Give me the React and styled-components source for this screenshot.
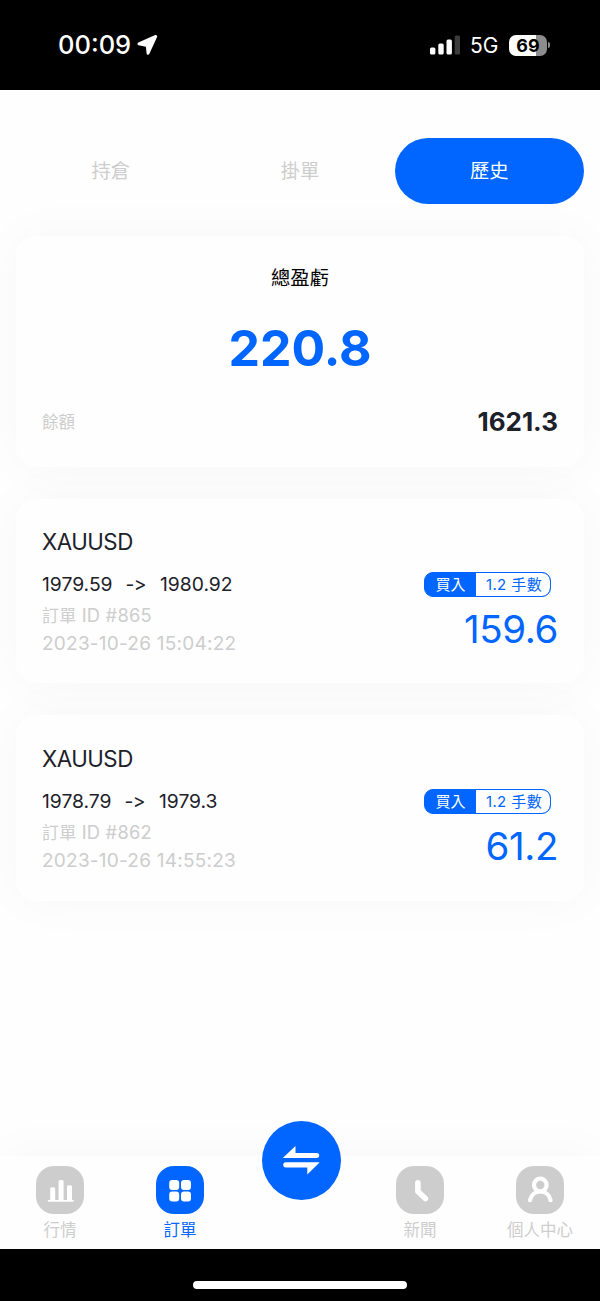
import React from "react";
import styled, { createGlobalStyle } from "styled-components";

const BLUE = "#0066ff";
const GREY = "#cdcdcd";
const INK = "#1d2129";

const GlobalStyle = createGlobalStyle`
  * { box-sizing: border-box; }
  body {
    margin: 0;
    background: #fff;
    font-family: Inter, "Noto Sans CJK TC", sans-serif;
    color: ${INK};
  }
`;

const Screen = styled.div`
  display: flex;
  flex-direction: column;
  width: 600px;
  height: 1301px;
  overflow: hidden;
  background: #fefefe;
`;

const StatusBar = styled.header`
  display: flex;
  justify-content: space-between;
  align-items: center;
  height: 90px;
  flex: none;
  padding: 0 50px 0 58px;
  background: #000;
  color: #fff;
`;

const StatusGroup = styled.div`
  display: flex;
  align-items: center;
  height: 26px;
`;

const Clock = styled.span`
  width: 73px;
  margin: -1px 6px 0 0;
  font-size: 25.5px;
  font-weight: 500;
  white-space: nowrap;
`;

const Network = styled.span`
  width: 29px;
  margin: 1px 10px 0 9px;
  font-size: 21px;
`;

const Battery = styled.div`
  display: flex;
  align-items: center;
  justify-content: center;
  width: 38px;
  height: 21px;
  border-radius: 7px;
  background: linear-gradient(to right, #fff 70%, #8c8c8c 70%);
  color: #000;
  font-size: 18px;
  font-weight: 700;
`;

const BatteryCap = styled.span`
  width: 2px;
  height: 6px;
  margin-left: 1px;
  border-radius: 0 2px 2px 0;
  background: #8c8c8c;
`;

const Content = styled.main`
  display: flex;
  flex-direction: column;
  gap: 32px;
  flex: 1;
  padding: 48px 16px 0;
`;

const Tabs = styled.nav`
  display: flex;
  height: 66px;
`;

const Tab = styled.button`
  flex: 1;
  height: 65.5px;
  padding: 0;
  border: 0;
  border-radius: 33px;
  background: ${(p) => (p.$active ? BLUE : "transparent")};
  color: ${(p) => (p.$active ? "#fff" : GREY)};
  font: 400 19.3px/66px Inter, "Noto Sans CJK TC", sans-serif;
`;

const Card = styled.section`
  border-radius: 20px;
  background: #fefefe;
  box-shadow: 0 0 54px rgba(0, 0, 0, 0.03);
`;

const SummaryCard = styled(Card)`
  display: flex;
  flex-direction: column;
  align-items: center;
  height: 231px;
  padding: 27px 26px 0;
`;

const SummaryTitle = styled.h1`
  margin: 0;
  font-size: 19.3px;
  line-height: 30px;
  font-weight: 400;
  color: #000;
`;

const SummaryTotal = styled.div`
  margin-top: 23px;
  font-size: 50px;
  line-height: 64px;
  font-weight: 700;
  color: ${BLUE};
`;

const BalanceRow = styled.div`
  display: flex;
  justify-content: space-between;
  align-items: center;
  align-self: stretch;
  height: 32px;
  margin-top: 25px;
`;

const Muted = styled.div`
  font-size: 16.5px;
  color: ${GREY};
`;

const Balance = styled.strong`
  font-size: 26px;
  font-weight: 700;
`;

const OrderCard = styled(Card)`
  display: flex;
  justify-content: space-between;
  height: ${(p) => p.$height}px;
  padding: ${(p) => p.$top}px 26px 0;
`;

const OrderInfo = styled.div`
  padding-top: 0.5px;
  white-space: nowrap;
`;

const Symbol = styled.h2`
  margin: 0;
  font-size: 22.3px;
  line-height: 32px;
  font-weight: 400;
  letter-spacing: -0.5px;
`;

const Prices = styled.div`
  display: flex;
  margin-top: 11.5px;
  font-size: 19.3px;
  line-height: 30px;
`;

const Arrow = styled.span`
  margin: 0 14px 0 13px;
  font-feature-settings: "calt" 0;
  letter-spacing: -0.6px;
`;

const Detail = styled.div`
  font-size: ${(p) => p.$size}px;
  line-height: ${(p) => p.$line}px;
  letter-spacing: ${(p) => p.$spacing}px;
  color: ${GREY};
`;

const Cjk = styled.span`
  font-size: 17px;
`;

const OrderResult = styled.div`
  display: flex;
  flex-direction: column;
  align-items: flex-end;
  padding-top: 47px;
`;

const Badge = styled.div`
  display: flex;
  width: 127px;
  height: 25px;
  margin-right: 7px;
  border: 1.5px solid ${BLUE};
  border-radius: 9px;
  overflow: hidden;
  background: ${BLUE};
  font-size: 15px;
  line-height: 23px;
  white-space: nowrap;
`;

const Side = styled.span`
  width: 51px;
  text-align: center;
  color: #fff;
`;

const Lots = styled.span`
  flex: 1;
  border-radius: 0 8px 8px 0;
  text-align: center;
  background: #fefefe;
  color: ${BLUE};
  letter-spacing: 0.4px;
  text-indent: 2px;
`;

const Profit = styled.div`
  margin-top: 8px;
  font-size: 38.5px;
  line-height: 48px;
  letter-spacing: -0.4px;
  color: ${BLUE};
`;

const TabBar = styled.nav`
  position: relative;
  display: grid;
  grid-template-columns: repeat(5, 1fr);
  height: 93px;
  flex: none;
  padding-top: 10px;
  background: #fefefe;
  box-shadow: 0 0 54px rgba(0, 0, 0, 0.03);
`;

const NavItem = styled.div`
  display: flex;
  flex-direction: column;
  align-items: center;
  color: ${(p) => (p.$active ? BLUE : GREY)};
  font-size: 16.5px;
  line-height: 32px;
  white-space: nowrap;
`;

const NavIcon = styled.div`
  width: 48px;
  height: 47.6px;
  margin-top: 0.4px;
  border-radius: 18px;
  background: currentColor;
  svg { display: block; }
`;

const TradeButton = styled.button`
  justify-self: center;
  width: 79px;
  height: 79px;
  margin: -45px 0 0 2px;
  padding: 0;
  border: 0;
  border-radius: 50%;
  background: ${BLUE};
  svg { display: block; }
`;

const HomeArea = styled.footer`
  display: flex;
  justify-content: center;
  align-items: center;
  height: 52px;
  flex: none;
  padding-top: 20px;
  background: #000;
`;

const HomeIndicator = styled.div`
  width: 214px;
  height: 8px;
  border-radius: 4px;
  background: #fff;
`;

const LocationIcon = () => (
  <svg width="22" height="22" viewBox="0 0 22 22">
    <path d="M18.8 2.4L1.9 9.9L10.2 11.6L11 19.3Z" fill="#fff" stroke="#fff" strokeWidth="2.8" strokeLinejoin="round" />
  </svg>
);

const SignalIcon = () => (
  <svg width="31" height="20" viewBox="0 0 31 20">
    <rect x="0" y="12.5" width="5.4" height="7" rx="1.5" fill="#fff" />
    <rect x="8.3" y="8.5" width="5.4" height="11" rx="1.5" fill="#fff" />
    <rect x="16.5" y="4.5" width="5.4" height="15" rx="1.5" fill="#fff" />
    <rect x="24.7" y=".5" width="5.3" height="19" rx="1.5" fill="#3c3c3c" />
  </svg>
);

const NavDrawing = ({ children }) => (
  <svg width="48" height="48" viewBox="0 0 48 48" fill="#fff">{children}</svg>
);

const ChartIcon = () => (
  <NavDrawing>
    <path d="M14.2 34V22.8q0-1.5 1.5-1.5h2q1.5 0 1.5 1.5v11.2zM22.6 34V15.4q0-1.5 1.5-1.5h2q1.5 0 1.5 1.5v18.6zM31 34V20.8q0-1.5 1.5-1.5h2q1.5 0 1.5 1.5v13.2z" />
    <rect x="11.8" y="34" width="26" height="1.8" rx=".8" />
  </NavDrawing>
);

const GridIcon = () => (
  <NavDrawing>
    <rect x="13.2" y="13.9" width="10" height="10.2" rx="3" />
    <rect x="25" y="13.9" width="10" height="10.2" rx="3" />
    <rect x="13.2" y="25.4" width="10" height="10.2" rx="3" />
    <rect x="25" y="25.4" width="10" height="10.2" rx="3" />
  </NavDrawing>
);

const ClockIcon = () => (
  <NavDrawing>
    <path d="M21.9 16.9V25.4L29.4 32.6" fill="none" stroke="#fff" strokeWidth="5.6" strokeLinecap="round" strokeLinejoin="round" />
  </NavDrawing>
);

const UserIcon = () => (
  <NavDrawing>
    <g fill="none" stroke="#fff" strokeWidth="4.2" strokeLinecap="round">
      <circle cx="24.3" cy="19" r="6.3" />
      <path d="M14 34.2C16.6 22.4 32 22.4 34.6 34.2" />
    </g>
  </NavDrawing>
);

const SwapIcon = () => (
  <svg width="79" height="79" viewBox="0 0 79 79" fill="#fff">
    <path d="M21 36.8L33.5 25V32H55Q57.3 32.2 57.3 34.5T55 37H21.4Z" />
    <path d="M57.5 41.4L45.3 53.5V46.5H23.8Q21.2 46.3 21.2 43.8T23.8 41.2H57Z" />
  </svg>
);

const orders = [
  { id: 865, height: 184, top: 26, open: "1979.59", close: "1980.92", time: "2023-10-26 15:04:22", profit: "159.6" },
  { id: 862, height: 186, top: 27, open: "1978.79", close: "1979.3", time: "2023-10-26 14:55:23", profit: "61.2" },
];

function Order({ order }) {
  return (
    <OrderCard $height={order.height} $top={order.top}>
      <OrderInfo>
        <Symbol>XAUUSD</Symbol>
        <Prices>
          <span>{order.open}</span>
          <Arrow>-&gt;</Arrow>
          <span>{order.close}</span>
        </Prices>
        <Detail $size={18.3} $line={32} $spacing={0.2}><Cjk>訂單</Cjk> ID #{order.id}</Detail>
        <Detail $size={19} $line={23} $spacing={0.24}>{order.time}</Detail>
      </OrderInfo>
      <OrderResult>
        <Badge>
          <Side>買入</Side>
          <Lots>1.2 手數</Lots>
        </Badge>
        <Profit>{order.profit}</Profit>
      </OrderResult>
    </OrderCard>
  );
}

export default function App() {
  return (
    <>
      <GlobalStyle />
      <Screen>
        <StatusBar>
          <StatusGroup>
            <Clock>00:09</Clock>
            <LocationIcon />
          </StatusGroup>
          <StatusGroup>
            <SignalIcon />
            <Network>5G</Network>
            <Battery>69</Battery>
            <BatteryCap />
          </StatusGroup>
        </StatusBar>
        <Content>
          <Tabs>
            <Tab>持倉</Tab>
            <Tab>掛單</Tab>
            <Tab $active>歷史</Tab>
          </Tabs>
          <SummaryCard>
            <SummaryTitle>總盈虧</SummaryTitle>
            <SummaryTotal>220.8</SummaryTotal>
            <BalanceRow>
              <Muted>餘額</Muted>
              <Balance>1621.3</Balance>
            </BalanceRow>
          </SummaryCard>
          {orders.map((order) => (
            <Order key={order.id} order={order} />
          ))}
        </Content>
        <TabBar>
          <NavItem><NavIcon><ChartIcon /></NavIcon>行情</NavItem>
          <NavItem $active><NavIcon><GridIcon /></NavIcon>訂單</NavItem>
          <TradeButton aria-label="交易"><SwapIcon /></TradeButton>
          <NavItem><NavIcon><ClockIcon /></NavIcon>新聞</NavItem>
          <NavItem><NavIcon><UserIcon /></NavIcon>個人中心</NavItem>
        </TabBar>
        <HomeArea><HomeIndicator /></HomeArea>
      </Screen>
    </>
  );
}
